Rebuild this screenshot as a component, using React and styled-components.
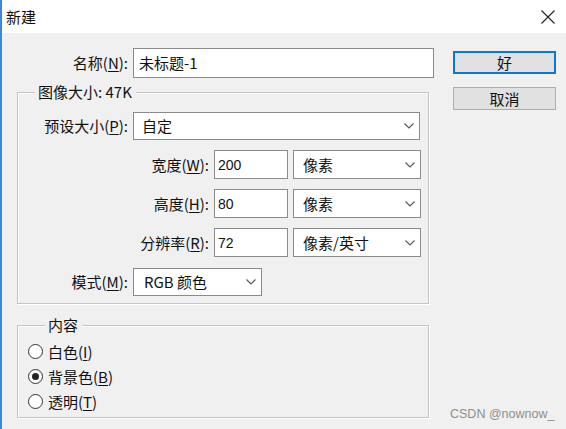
import styled, { createGlobalStyle } from 'styled-components'

const GlobalStyle = createGlobalStyle`
  html, body {
    margin: 0;
    padding: 0;
    background: #f0f0f0;
  }
  body {
    font-family: "Noto Sans CJK SC", "Noto Sans", sans-serif;
    color: #111;
  }
`

const Window = styled.div`
  width: 566px;
  height: 429px;
  box-sizing: border-box;
  border-left: 2px solid #3b87d8;
  background: #f0f0f0;
  display: flex;
  flex-direction: column;
  overflow: hidden;
`

const TitleBar = styled.div`
  height: 33px;
  flex: none;
  background: #fff;
  display: flex;
  align-items: center;
  justify-content: space-between;
  padding: 0 11px 0 4px;
`

const Title = styled.span`
  font-size: 15px;
  line-height: 20px;
`

const Body = styled.div`
  flex: 1;
  display: flex;
  padding: 15px 10px 0 15px;
`

const MainCol = styled.div`
  width: 416px;
  display: flex;
  flex-direction: column;
`

const ButtonCol = styled.div`
  width: 104px;
  margin-left: 20px;
  padding-top: 3px;
  display: flex;
  flex-direction: column;
  gap: 13px;
`

const Button = styled.div`
  height: 23px;
  box-sizing: border-box;
  background: #e1e1e1;
  border: ${p => (p.$default ? '2px solid #0a78d6' : '1px solid #adadad')};
  display: flex;
  align-items: center;
  justify-content: center;
  font-size: 15px;
  line-height: 18px;
`

const Watermark = styled.span`
  margin-top: auto;
  margin-bottom: 8px;
  margin-left: -3px;
  font-family: "Liberation Sans", Arial, sans-serif;
  font-size: 12.5px;
  line-height: 14px;
  color: #8f8f8f;
  white-space: nowrap;
`

const Row = styled.div`
  display: flex;
  align-items: center;
  gap: ${p => p.$gap || 5}px;
`

const Label = styled.span`
  width: ${p => p.$w}px;
  flex: none;
  text-align: right;
  font-size: 15px;
  line-height: 20px;
  white-space: nowrap;
`

const U = styled.span`
  text-decoration: underline;
  text-underline-offset: 2px;
`

const Field = styled.div`
  width: ${p => p.$w}px;
  height: ${p => p.$h}px;
  box-sizing: border-box;
  flex: none;
  background: #fff;
  border: 1px solid #8a8a8a;
  display: flex;
  align-items: center;
  padding-left: ${p => p.$pl || 4}px;
  font-family: ${p => (p.$num ? '"Liberation Sans", Arial' : '"Noto Sans CJK SC"')}, "Noto Sans CJK SC", sans-serif;
  font-size: ${p => (p.$num ? 14 : 15)}px;
  line-height: 18px;
  white-space: nowrap;
`

const Select = styled(Field)`
  justify-content: space-between;
  padding-right: 5px;
`

const Group = styled.fieldset`
  width: 412px;
  box-sizing: border-box;
  margin: ${p => p.$mt}px 0 0 0;
  padding: ${p => p.$pt}px 0 ${p => p.$pb}px ${p => p.$pl || 0}px;
  border: 1px solid #c4c4c4;
  box-shadow: inset 1px 1px 0 #fff, 1px 1px 0 #fff;
  min-width: 0;
`

const Legend = styled.legend`
  margin-left: 17px;
  padding: 0 4px 0 3px;
  font-size: 15px;
  line-height: 20px;
  background: #f0f0f0;
`

const Stack = styled.div`
  display: flex;
  flex-direction: column;
  gap: ${p => p.$gap}px;
`

const RadioRow = styled.div`
  height: 25px;
  display: flex;
  align-items: center;
  gap: 5px;
  font-size: 15px;
  line-height: 20px;
`

const RadioDot = styled.span`
  width: 15px;
  height: 15px;
  box-sizing: border-box;
  border-radius: 50%;
  border: 1px solid #333;
  background: #fff;
  display: flex;
  align-items: center;
  justify-content: center;

  &::after {
    content: '';
    width: 7px;
    height: 7px;
    border-radius: 50%;
    background: ${p => (p.$checked ? '#222' : 'transparent')};
  }
`

const Chevron = () => (
  <svg width="10" height="6" viewBox="0 0 10 6">
    <polyline points="0.5,0.5 5,5 9.5,0.5" fill="none" stroke="#555" strokeWidth="1.1" />
  </svg>
)

const CloseIcon = () => (
  <svg width="14" height="14" viewBox="0 0 14 14">
    <path d="M0.5 0.5 L13.5 13.5 M13.5 0.5 L0.5 13.5" stroke="#222" strokeWidth="1.1" />
  </svg>
)

const Dropdown = ({ w, h, pl, children }) => (
  <Select $w={w} $h={h} $pl={pl}>
    <span>{children}</span>
    <Chevron />
  </Select>
)

const SizeRow = ({ label, letter, value, unit }) => (
  <Row>
    <Label $w={191}>
      {label}(<U>{letter}</U>):
    </Label>
    <Field $w={74} $h={29} $pl={3} $num>{value}</Field>
    <Dropdown w={128} h={29} pl={9}>{unit}</Dropdown>
  </Row>
)

const Radio = ({ label, letter, checked }) => (
  <RadioRow>
    <RadioDot $checked={checked} />
    <span>{label}(<U>{letter}</U>)</span>
  </RadioRow>
)

export default function App() {
  return (
    <>
      <GlobalStyle />
      <Window>
        <TitleBar>
          <Title>新建</Title>
          <CloseIcon />
        </TitleBar>
        <Body>
          <MainCol>
            <Row>
              <Label $w={111}>
                名称(<U>N</U>):
              </Label>
              <Field $w={301} $h={30} $pl={5}>未标题-1</Field>
            </Row>

            <Group $mt={4} $pt={10} $pb={7}>
              <Legend>图像大小: 47K</Legend>
              <Stack $gap={10}>
                <Row>
                  <Label $w={110}>
                    预设大小(<U>P</U>):
                  </Label>
                  <Dropdown w={287} h={28} pl={8}>自定</Dropdown>
                </Row>
                <SizeRow label="宽度" letter="W" value="200" unit="像素" />
                <SizeRow label="高度" letter="H" value="80" unit="像素" />
                <SizeRow label="分辨率" letter="R" value="72" unit="像素/英寸" />
                <Row style={{ marginTop: 1 }}>
                  <Label $w={110}>
                    模式(<U>M</U>):
                  </Label>
                  <Dropdown w={129} h={28} pl={10}>RGB 颜色</Dropdown>
                </Row>
              </Stack>
            </Group>

            <Group $mt={11} $pt={4} $pb={3} $pl={10}>
              <Legend>内容</Legend>
              <Radio label="白色" letter="I" />
              <Radio label="背景色" letter="B" checked />
              <Radio label="透明" letter="T" />
            </Group>
          </MainCol>

          <ButtonCol>
            <Button $default>好</Button>
            <Button>取消</Button>
            <Watermark>CSDN @nownow_</Watermark>
          </ButtonCol>
        </Body>
      </Window>
    </>
  )
}
